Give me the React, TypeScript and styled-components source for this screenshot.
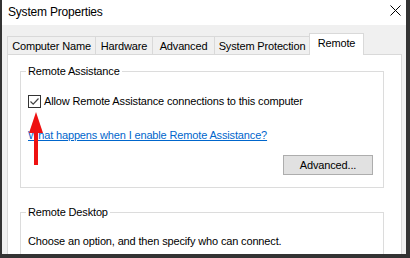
import styled, { createGlobalStyle } from 'styled-components'

const GlobalStyle = createGlobalStyle`
  html, body {
    margin: 0;
    padding: 0;
    overflow: hidden;
    background: #333;
  }
  * {
    box-sizing: border-box;
  }
`

const tabs = [
  { label: 'Computer Name', width: 89 },
  { label: 'Hardware', width: 58 },
  { label: 'Advanced', width: 63 },
  { label: 'System Protection', width: 96 },
  { label: 'Remote', width: 55, active: true },
]

const Window = styled.div`
  position: relative;
  width: 410px;
  height: 258px;
  overflow: hidden;
  display: flex;
  flex-direction: column;
  border-left: 2px solid #333;
  border-right: 4px solid #333;
  border-bottom: 4px solid #333;
  background: #f0f0f0;
  font-family: 'Liberation Sans', Arial, sans-serif;
  font-size: 11px;
  letter-spacing: -0.15px;
  color: #000;
`

const TitleBar = styled.div`
  height: 25px;
  flex-shrink: 0;
  display: flex;
  align-items: center;
  justify-content: space-between;
  padding: 0 4px 1px 6px;
  background: #fff;
`

const Title = styled.span`
  font-size: 12px;
  letter-spacing: -0.2px;
`

const CloseButton = styled.div`
  width: 14px;
  height: 14px;
  display: flex;
  align-items: center;
  justify-content: center;
  margin-top: -4px;
`

const Body = styled.div`
  flex: 1;
  display: flex;
  flex-direction: column;
  padding: 8px 4px 0 5px;
`

const TabRow = styled.div`
  display: flex;
  align-items: flex-end;
  height: 21px;
`

const Tab = styled.div<{ $active?: boolean; $width: number }>`
  position: relative;
  z-index: ${(p) => (p.$active ? 1 : 0)};
  width: ${(p) => p.$width}px;
  height: ${(p) => (p.$active ? '22px' : '18px')};
  margin-bottom: ${(p) => (p.$active ? '-1px' : '0')};
  margin-right: -1px;
  padding-bottom: ${(p) => (p.$active ? '3px' : '0')};
  display: flex;
  align-items: center;
  justify-content: center;
  background: ${(p) => (p.$active ? '#fff' : '#f0f0f0')};
  border: 1px solid #d9d9d9;
  border-bottom: none;
  white-space: nowrap;
`

const Panel = styled.div`
  flex: 1;
  display: flex;
  flex-direction: column;
  padding: 9px 17px 0 12px;
  background: #fff;
  border: 1px solid #d9d9d9;
  border-bottom: none;
`

const Group = styled.fieldset<{ $gap?: number }>`
  margin: 0 0 ${(p) => p.$gap ?? 0}px 0;
  padding: 0 10px 12px 7px;
  border: 1px solid #dcdcdc;
  display: flex;
  flex-direction: column;
  min-width: 0;
`

const Legend = styled.legend`
  padding: 0 2px;
  margin-left: -2px;
  line-height: 14px;
`

const CheckRow = styled.label`
  display: flex;
  align-items: center;
  gap: 3px;
  height: 14px;
  margin-top: 16px;
`

const CheckBox = styled.span`
  width: 13px;
  height: 13px;
  display: flex;
  align-items: center;
  justify-content: center;
  border: 1px solid #333;
  background: #fff;
`

const HelpLink = styled.a`
  display: block;
  margin-top: 20px;
  line-height: 14px;
  color: #0066cc;
  text-decoration: underline;
  cursor: pointer;
`

const ButtonRow = styled.div`
  display: flex;
  justify-content: flex-end;
  margin-top: 13px;
`

const Button = styled.button`
  width: 90px;
  height: 20px;
  padding: 0;
  border: 1px solid #adadad;
  background: #e1e1e1;
  font: inherit;
  letter-spacing: inherit;
  color: #000;
`

const Text = styled.div`
  margin-top: 15px;
  line-height: 14px;
`

const Arrow = styled.svg`
  position: absolute;
  left: 24px;
  top: 110px;
`

export default function App() {
  return (
    <>
      <GlobalStyle />
      <Window>
        <TitleBar>
          <Title>System Properties</Title>
          <CloseButton>
            <svg width="11" height="11" viewBox="0 0 11 11">
              <path d="M0.5 0.5 L10.5 10.5 M10.5 0.5 L0.5 10.5" stroke="#000" strokeWidth="1" />
            </svg>
          </CloseButton>
        </TitleBar>
        <Body>
          <TabRow>
            {tabs.map((tab, index) => (
              <Tab key={index} $active={tab.active} $width={tab.width}>
                {tab.label}
              </Tab>
            ))}
          </TabRow>
          <Panel>
            <Group $gap={17}>
              <Legend>Remote Assistance</Legend>
              <CheckRow>
                <CheckBox>
                  <svg width="11" height="11" viewBox="0 0 11 11">
                    <path d="M1.5 5.5 L4.2 8.2 L9.5 2.5" stroke="#444" strokeWidth="1.2" fill="none" />
                  </svg>
                </CheckBox>
                Allow Remote Assistance connections to this computer
              </CheckRow>
              <HelpLink>What happens when I enable Remote Assistance?</HelpLink>
              <ButtonRow>
                <Button>Advanced...</Button>
              </ButtonRow>
            </Group>
            <Group>
              <Legend>Remote Desktop</Legend>
              <Text>Choose an option, and then specify who can connect.</Text>
            </Group>
          </Panel>
        </Body>
        <Arrow width="20" height="58" viewBox="0 0 20 58">
          <polygon points="10,2 3,23 8,23 8,55 12,55 12,23 17,23" fill="#ee1111" />
        </Arrow>
      </Window>
    </>
  )
}
